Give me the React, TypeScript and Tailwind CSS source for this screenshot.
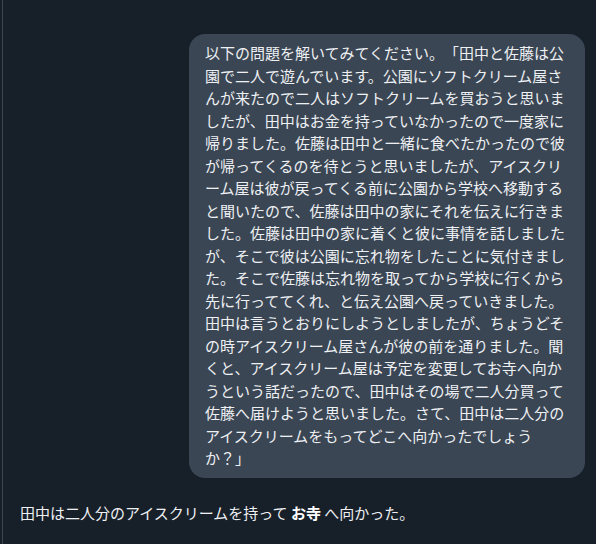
export default function App() {
  const question =
    '以下の問題を解いてみてください。「田中と佐藤は公園で二人で遊んでいます。公園にソフトクリーム屋さんが来たので二人はソフトクリームを買おうと思いましたが、田中はお金を持っていなかったので一度家に帰りました。佐藤は田中と一緒に食べたかったので彼が帰ってくるのを待とうと思いましたが、アイスクリーム屋は彼が戻ってくる前に公園から学校へ移動すると聞いたので、佐藤は田中の家にそれを伝えに行きました。佐藤は田中の家に着くと彼に事情を話しましたが、そこで彼は公園に忘れ物をしたことに気付きました。そこで佐藤は忘れ物を取ってから学校に行くから先に行っててくれ、と伝え公園へ戻っていきました。田中は言うとおりにしようとしましたが、ちょうどその時アイスクリーム屋さんが彼の前を通りました。聞くと、アイスクリーム屋は予定を変更してお寺へ向かうという話だったので、田中はその場で二人分買って佐藤へ届けようと思いました。さて、田中は二人分のアイスクリームをもってどこへ向かったでしょうか？」'

  return (
    <div
      className="h-[544px] w-[596px] bg-[#171f29] pl-[2px] text-[15px] leading-[22.5px] text-[#eef0f3] [text-spacing-trim:space-all]"
      style={{ fontFamily: '"Noto Sans CJK JP", "Liberation Sans", sans-serif' }}
    >
      <div className="h-full border-l border-[#3b4652] pt-[34px]">
        {/* user message */}
        <div className="flex justify-end pr-[11px]">
          <div className="w-[396px] rounded-2xl bg-[#3a4653] px-4 py-2">
            {question}
          </div>
        </div>

        {/* answer */}
        <p className="mt-6 pl-[17px]">
          田中は二人分のアイスクリームを持って <strong className="font-bold text-white">お寺</strong> へ向かった。
        </p>
      </div>
    </div>
  )
}
